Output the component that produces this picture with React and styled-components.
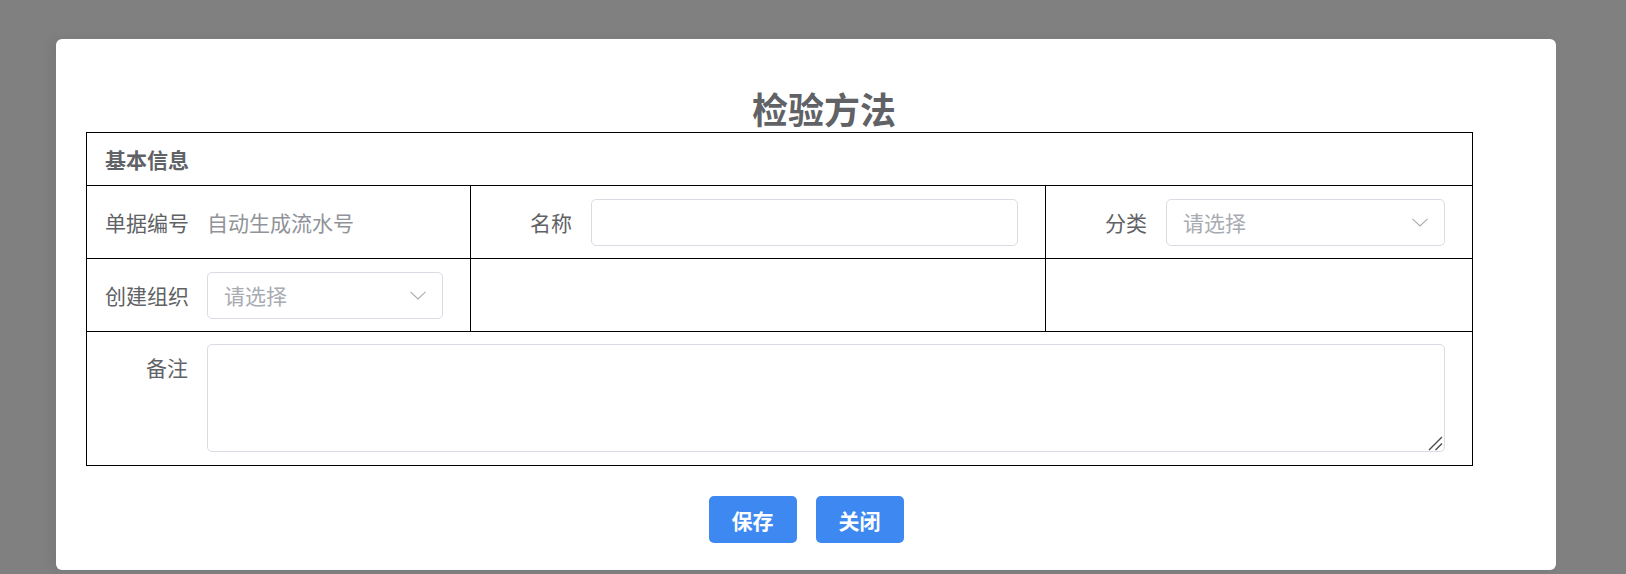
import React from "react";
import styled, { createGlobalStyle } from "styled-components";

const Global = createGlobalStyle`
  html, body { margin: 0; padding: 0; }
  body {
    background: #808080;
    font-family: "Noto Sans CJK SC", "Noto Sans", sans-serif;
  }
  * { box-sizing: border-box; }
`;

const Overlay = styled.div`
  width: 1626px;
  height: 574px;
  background: #808080;
  padding: 39px 0 0 56px;
`;

const Modal = styled.div`
  width: 1500px;
  height: 531px;
  background: #fff;
  border-radius: 6px;
  display: flex;
  flex-direction: column;
  padding-top: 46px;
  box-shadow: -6px 0 12px rgba(0, 0, 0, 0.06);
`;

const Title = styled.h1`
  margin: 0;
  padding-left: 36px;
  text-align: center;
  font-size: 36px;
  line-height: 47px;
  font-weight: 700;
  color: #606266;
`;

const Sheet = styled.div`
  margin-left: 30px;
  width: 1387px;
  border: 1px solid #000;
  display: grid;
  grid-template-columns: 384px 575px 426px;
`;

const SectionHead = styled.div`
  grid-column: 1 / -1;
  height: 53px;
  border-bottom: 1px solid #000;
  display: flex;
  align-items: center;
  padding-left: 18px;
  font-size: 21px;
  font-weight: 700;
  color: #606266;
`;

const Cell = styled.div`
  display: flex;
  align-items: ${(p) => (p.$top ? "flex-start" : "center")};
  height: ${(p) => p.$h}px;
  padding: ${(p) => (p.$top ? "12px" : "0")} 27px 0 18px;
  border-right: ${(p) => (p.$last ? "none" : "1px solid #000")};
  border-bottom: ${(p) => (p.$bottom ? "none" : "1px solid #000")};
  grid-column: ${(p) => (p.$span ? "1 / -1" : "auto")};
`;

const Label = styled.span`
  flex: 0 0 83px;
  width: 83px;
  margin-right: 19px;
  text-align: right;
  font-size: 21px;
  line-height: ${(p) => (p.$tall ? "46px" : "30px")};
  color: #606266;
  white-space: nowrap;
`;

const Value = styled.span`
  font-size: 21px;
  color: #909399;
  white-space: nowrap;
`;

const TextInput = styled.input`
  flex: 1;
  min-width: 0;
  height: 47px;
  border: 1px solid #d9dce3;
  border-radius: 5px;
  outline: none;
  padding: 0 16px;
  font-family: inherit;
  font-size: 21px;
  color: #606266;
  background: #fff;
`;

const SelectBox = styled.div`
  flex: 1;
  min-width: 0;
  height: 47px;
  border: 1px solid #d9dce3;
  border-radius: 5px;
  display: flex;
  align-items: center;
  justify-content: space-between;
  padding: 0 16px 0 16px;
  background: #fff;
`;

const Placeholder = styled.span`
  font-size: 21px;
  color: #a8abb2;
  white-space: nowrap;
`;

const Chevron = styled.svg`
  width: 16px;
  height: 9px;
  flex: none;
`;

const AreaWrap = styled.div`
  position: relative;
  flex: 1;
  display: flex;
`;

const TextArea = styled.textarea`
  flex: 1;
  height: 108px;
  border: 1px solid #d9dce3;
  border-radius: 5px;
  outline: none;
  resize: none;
  padding: 8px 16px;
  font-family: inherit;
  font-size: 21px;
  color: #606266;
  background: #fff;
`;

const Grip = styled.svg`
  position: absolute;
  right: 2px;
  bottom: 1px;
  width: 15px;
  height: 15px;
  pointer-events: none;
`;

const Footer = styled.div`
  display: flex;
  justify-content: center;
  gap: 19px;
  margin-top: 30px;
`;

const Button = styled.button`
  width: 88px;
  height: 47px;
  border: none;
  border-radius: 5px;
  background: #3e88f2;
  color: #fff;
  font-family: inherit;
  font-size: 21px;
  font-weight: 700;
  cursor: pointer;
`;

const Select = ({ placeholder = "请选择" }) => (
  <SelectBox>
    <Placeholder>{placeholder}</Placeholder>
    <Chevron viewBox="0 0 16 9">
      <path d="M0.5 0.8 L8 8 L15.5 0.8" fill="none" stroke="#a8abb2" strokeWidth="1.1" />
    </Chevron>
  </SelectBox>
);

export default function App() {
  return (
    <>
      <Global />
      <Overlay>
        <Modal>
          <Title>检验方法</Title>
          <Sheet>
            <SectionHead>基本信息</SectionHead>

            <Cell $h={73}>
              <Label>单据编号</Label>
              <Value>自动生成流水号</Value>
            </Cell>
            <Cell $h={73}>
              <Label>名称</Label>
              <TextInput />
            </Cell>
            <Cell $h={73} $last>
              <Label>分类</Label>
              <Select />
            </Cell>

            <Cell $h={73}>
              <Label>创建组织</Label>
              <Select />
            </Cell>
            <Cell $h={73} />
            <Cell $h={73} $last />

            <Cell $h={133} $span $top $last $bottom>
              <Label $tall>备注</Label>
              <AreaWrap>
                <TextArea />
                <Grip viewBox="0 0 15 15">
                  <path d="M1 14 L14 1 M7.5 14 L14 7.5" stroke="#4a4a4a" strokeWidth="1.4" fill="none" />
                </Grip>
              </AreaWrap>
            </Cell>
          </Sheet>
          <Footer>
            <Button>保存</Button>
            <Button>关闭</Button>
          </Footer>
        </Modal>
      </Overlay>
    </>
  );
}
